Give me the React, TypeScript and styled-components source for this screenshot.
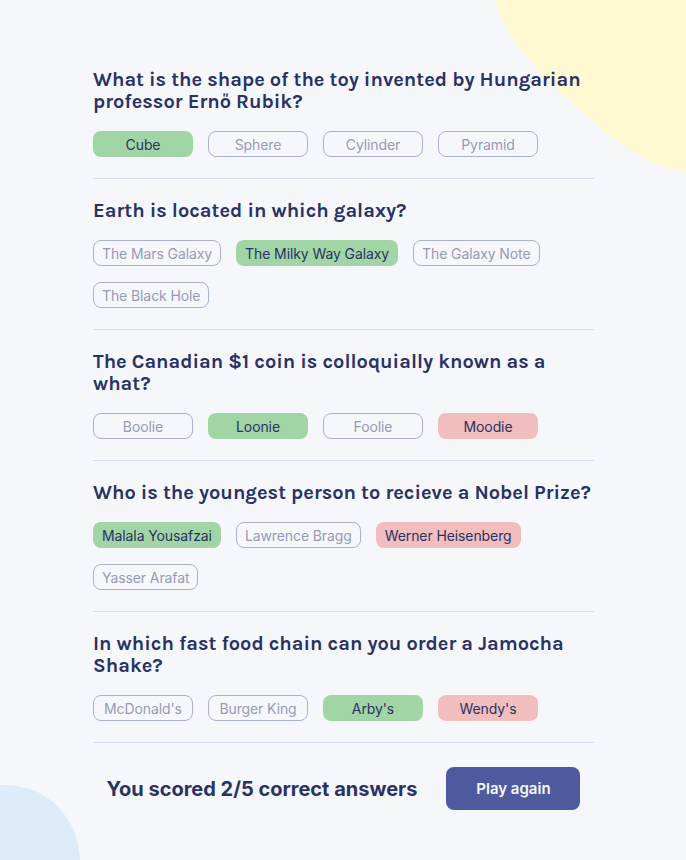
import React from "react";
import styled, { createGlobalStyle } from "styled-components";

const Global = createGlobalStyle`
  html, body { margin: 0; padding: 0; background: #F5F7FB; }
  body { font-family: Inter, "Liberation Sans", sans-serif; }
`;

const Page = styled.main`
  position: relative;
  width: 686px;
  height: 860px;
  overflow: hidden;
  background: #F5F7FB;
  box-sizing: border-box;
  padding: 69px 92px 0 93px;
`;

const Blob = styled.svg`
  position: absolute;
  top: 0;
  left: 0;
  width: 686px;
  height: 860px;
  pointer-events: none;
`;

const Content = styled.div`
  position: relative;
  display: flex;
  flex-direction: column;
`;

const Section = styled.section<{ $first?: boolean }>`
  display: flex;
  flex-direction: column;
  padding: ${(p) => (p.$first ? "0" : "21px")} 0 21px;
  border-bottom: 1px solid #DBDEF0;
`;

const Question = styled.h2`
  margin: 0 0 18px;
  font-family: Karla, "Open Sans", sans-serif;
  font-weight: 700;
  font-size: 20px;
  line-height: 22px;
  color: #293264;
`;

const Answers = styled.div`
  display: flex;
  flex-wrap: wrap;
  gap: 16px 15px;
`;

type State = "correct" | "wrong" | "idle";

const Answer = styled.span<{ $state: State }>`
  box-sizing: border-box;
  min-width: 100px;
  height: 26px;
  padding: 0 8px;
  display: inline-flex;
  align-items: center;
  justify-content: center;
  border-radius: 8px;
  font-family: Inter, "Liberation Sans", sans-serif;
  font-size: 14px;
  letter-spacing: -0.1px;
  border: 1px solid ${(p) => (p.$state === "idle" ? "#A9AFD6" : "transparent")};
  background: ${(p) =>
    p.$state === "correct" ? "#A1D5A5" : p.$state === "wrong" ? "#F1BEBD" : "transparent"};
  color: ${(p) => (p.$state === "idle" ? "#979BB8" : "#293264")};
`;

const Footer = styled.div`
  display: flex;
  align-items: center;
  justify-content: center;
  gap: 29px;
  padding-top: 24px;
`;

const Score = styled.p`
  margin: 0;
  font-family: Inter, "Liberation Sans", sans-serif;
  font-weight: 700;
  font-size: 20px;
  color: #293264;
`;

const PlayButton = styled.button`
  width: 134px;
  height: 43px;
  border: none;
  border-radius: 8px;
  background: #4D5B9E;
  color: #F5F7FB;
  font-family: Inter, "Liberation Sans", sans-serif;
  font-weight: 600;
  font-size: 15px;
  cursor: pointer;
`;

const data: { q: string; a: [string, State][] }[] = [
  {
    q: "What is the shape of the toy invented by Hungarian professor Ernő Rubik?",
    a: [["Cube", "correct"], ["Sphere", "idle"], ["Cylinder", "idle"], ["Pyramid", "idle"]],
  },
  {
    q: "Earth is located in which galaxy?",
    a: [["The Mars Galaxy", "idle"], ["The Milky Way Galaxy", "correct"], ["The Galaxy Note", "idle"], ["The Black Hole", "idle"]],
  },
  {
    q: "The Canadian $1 coin is colloquially known as a what?",
    a: [["Boolie", "idle"], ["Loonie", "correct"], ["Foolie", "idle"], ["Moodie", "wrong"]],
  },
  {
    q: "Who is the youngest person to recieve a Nobel Prize?",
    a: [["Malala Yousafzai", "correct"], ["Lawrence Bragg", "idle"], ["Werner Heisenberg", "wrong"], ["Yasser Arafat", "idle"]],
  },
  {
    q: "In which fast food chain can you order a Jamocha Shake?",
    a: [["McDonald's", "idle"], ["Burger King", "idle"], ["Arby's", "correct"], ["Wendy's", "wrong"]],
  },
];

export default function App() {
  return (
    <>
      <Global />
      <Page>
        <Blob viewBox="0 0 686 860">
          <path d="M495,0 C505,40 540,75 580,110 C620,145 650,168 686,172 L686,0 Z" fill="#FFFAD1" />
          <path d="M0,785 C45,783 78,815 80,860 L0,860 Z" fill="#DEEBF8" />
        </Blob>
        <Content>
          {data.map((item, i) => (
            <Section key={i} $first={i === 0}>
              <Question>{item.q}</Question>
              <Answers>
                {item.a.map(([t, s]) => (
                  <Answer key={t} $state={s}>{t}</Answer>
                ))}
              </Answers>
            </Section>
          ))}
          <Footer>
            <Score>You scored 2/5 correct answers</Score>
            <PlayButton>Play again</PlayButton>
          </Footer>
        </Content>
      </Page>
    </>
  );
}
